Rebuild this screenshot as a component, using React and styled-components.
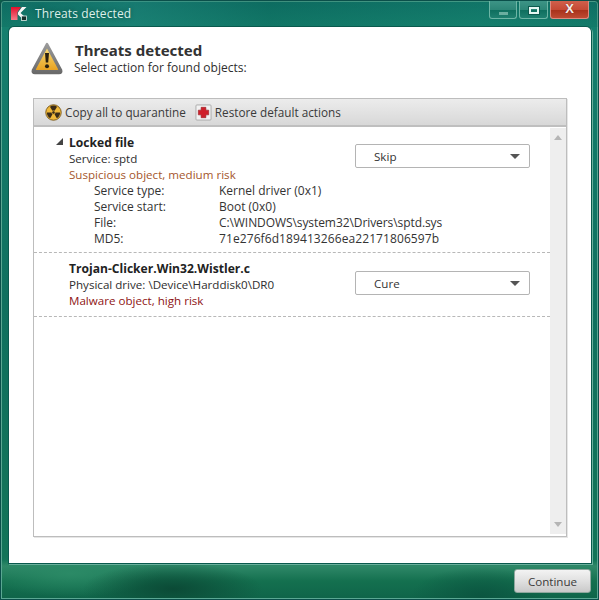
import React from "react";
import styled, { createGlobalStyle } from "styled-components";

const Global = createGlobalStyle`
  html, body { margin: 0; padding: 0; background: #0d5f48; }
  #root { width: 599px; height: 600px; }
  * { box-sizing: border-box; }
`;

const Win = styled.div`
  width: 599px; height: 600px; display: flex; flex-direction: column; overflow: hidden;
  font-family: "Open Sans", "Noto Sans", sans-serif; font-size: 11.6px; color: #2b2b2b;
  border: 1px solid #0b4f4a; border-radius: 4px 4px 0 0;
  background:
    radial-gradient(ellipse 90px 26px at 172px 588px, #0b4a36 0%, rgba(11,74,54,0) 100%),
    radial-gradient(ellipse 70px 30px at 480px 596px, #0b5540 0%, rgba(11,85,64,0) 100%),
    radial-gradient(ellipse 90px 24px at 70px 572px, #2b8a66 0%, rgba(43,138,102,0) 100%),
    linear-gradient(180deg, #0e6f66 0%, #157f6e 4%, #10705f 50%, #137458 93.5%, #2f8868 94.5%, #14704f 97%, #0f6449 100%);
  box-shadow: inset 0 0 0 1px #5aa792;
`;

const TitleBar = styled.div`
  height: 26px; flex: none; display: flex; align-items: flex-start; padding-left: 10px;
  background: linear-gradient(90deg, rgba(10,90,80,.2), rgba(30,130,120,.55) 22%, rgba(10,100,85,.35) 45%, rgba(20,125,105,.35) 80%, rgba(10,100,85,.2));
`;

const AppIcon = styled.svg`
  width: 16px; height: 15px; margin-top: 5px; flex: none;
`;

const TitleText = styled.span`
  margin: 4px 0 0 8px; color: #dcefea; font-size: 12px; line-height: 18px; letter-spacing: .1px;
  text-shadow: 0 0 4px rgba(0,40,30,.5);
`;

const Controls = styled.div`
  margin-left: auto; margin-right: 9px; display: flex; gap: 2px;
`;

const Ctl = styled.div`
  height: 18px; width: ${p => p.$w}px; display: flex; align-items: center; justify-content: center;
  border: 1px solid ${p => (p.$red ? "#dd8a80" : "#6db5a5")}; border-top: none;
  border-radius: 0 0 3px 3px;
  background: ${p => p.$red
    ? "linear-gradient(180deg,#d0604c 0%,#c54a35 50%,#a8321c 55%,#bd4a32 100%)"
    : "linear-gradient(180deg,#3d9486 0%,#2d8677 50%,#0f6f5f 55%,#1f8070 100%)"};
`;

const MinGlyph = styled.div`
  width: 9px; height: 3px; margin-top: 7px; background: #6aaea0;
`;
const MaxGlyph = styled.div`
  width: 10px; height: 7px; background: transparent; border: 2px solid #e6f6f2; border-top-width: 2px;
  outline: 1px solid #0d5a4e; margin-top: 1px;
`;
const CloseGlyph = styled.span`
  font: bold 13px "Liberation Sans", sans-serif; color: #f4ece8; line-height: 14px; margin-top: -1px;
  text-shadow: 0 0 1px #6b1a0c;
`;

const Body = styled.main`
  flex: 1; margin: 0 7px 0 8px; background: #fff; border-radius: 5px 5px 0 0;
  box-shadow: 0 0 0 1px #0a5a4e, 1px 1px 0 1px #6ab09c;
  padding: 13px 24px 26px 24px; display: flex; flex-direction: column; min-height: 0;
`;

const Head = styled.header`
  height: 58px; flex: none; display: flex; align-items: flex-start;
`;

const Warn = styled.svg`
  width: 34px; height: 35px; flex: none; margin-top: 1px; margin-left: -3px;
`;

const HeadText = styled.div`
  margin-left: 11px;
`;

const H1 = styled.h1`
  margin: 0; font-size: 15px; line-height: 20px; font-weight: 700; color: #333;
  font-family: "Noto Sans", sans-serif;
`;

const Sub = styled.div`
  font-size: 12px; line-height: 16px; margin-left: -1px; color: #2e2e2e;
`;

const Panel = styled.section`
  flex: 1; min-height: 0; border: 1px solid #bdbdbd; display: flex; flex-direction: column; background: #fff;
  box-shadow: 1px 1px 0 #e6e6e6;
`;

const Toolbar = styled.div`
  height: 28px; flex: none; display: flex; align-items: center; padding: 0 0 0 11px; gap: 9px;
  background: linear-gradient(180deg, #ececec 0%, #d8d8d8 100%); border-bottom: 2px solid #bfbfbf;
`;

const ToolBtn = styled.div`
  display: flex; align-items: center; gap: 3px; color: #3a3a3a; white-space: nowrap; font-size: 11.75px;
`;

const Tool = styled.svg`
  width: 17px; height: 17px; flex: none;
`;

const Content = styled.div`
  flex: 1; display: flex; min-height: 0;
`;

const List = styled.div`
  flex: 1; min-width: 0;
`;

const Item = styled.article`
  height: ${p => p.$h}px; border-bottom: 1px dashed #b8b8b8; padding: 8px 20px 0 35px;
`;

const TopRow = styled.div`
  display: flex; justify-content: space-between; align-items: flex-start;
`;

const ItemText = styled.div`
  line-height: 16px;
`;

const NameRow = styled.div`
  font-weight: 700; color: #222; position: relative; font-size: 12.1px;
`;

const Tri = styled.span`
  position: absolute; left: -13px; top: 3px; width: 0; height: 0;
  border-style: solid; border-width: 0 0 7px 7px; border-color: transparent transparent #444 transparent;
`;

const Line = styled.div`
  color: ${p => p.$c || "#2e2e2e"};
  white-space: nowrap;
`;

const Details = styled.dl`
  margin: 0 0 0 25px; display: grid; grid-template-columns: 125px auto; line-height: 16px; font-size: 12px;
`;
const Dt = styled.dt` color: #333; `;
const Dd = styled.dd`
  margin: 0; color: #333; white-space: nowrap; letter-spacing: ${p => p.$ls || 0}px;
`;

const Select = styled.div`
  width: 175px; height: 24px; flex: none; border: 1px solid #b4b4b4; border-radius: 2px; margin-top: ${p => p.$mt}px;
  background: #fff; display: flex; align-items: center; padding: 0 9px 0 18px; justify-content: space-between; color: #333;
`;

const Caret = styled.span`
  width: 0; height: 0; border-style: solid; border-width: 5px 5px 0 5px; border-color: #555 transparent transparent transparent;
`;

const Scroll = styled.aside`
  width: 16px; flex: none; background: #eeeeee; display: flex; flex-direction: column; justify-content: space-between; align-items: center; padding: 7px 0; margin: 1px 0 2px 0;
`;

const Up = styled.span`
  width: 0; height: 0; border-style: solid; border-width: 0 4px 5px 4px; border-color: transparent transparent #b5b5b5 transparent;
`;
const Down = styled.span`
  width: 0; height: 0; border-style: solid; border-width: 5px 4px 0 4px; border-color: #b5b5b5 transparent transparent transparent;
`;

const Footer = styled.footer`
  height: 36px; flex: none; display: flex; justify-content: flex-end; align-items: flex-start; padding: 6px 7px 0 0;
`;

const Continue = styled.button`
  width: 77px; height: 24px; border: 1px solid #8fa79e; border-radius: 3px; padding: 0;
  background: linear-gradient(180deg, #f3f3f3 0%, #e0e0e0 50%, #c9c9c9 100%);
  font: 11.6px "Open Sans", "Noto Sans", sans-serif; color: #3a3a3a;
`;

export default function App() {
  return (
    <Win>
      <Global />
      <TitleBar>
        <AppIcon viewBox="0 0 16 15">
          <defs>
            <linearGradient id="k" x1="0" y1="0" x2="0" y2="1">
              <stop offset="0" stopColor="#e3102c" />
              <stop offset="1" stopColor="#f47a88" />
            </linearGradient>
          </defs>
          <path d="M0 1H10L6.500 6V14H0z" fill="url(#k)" />
          <path d="M11 1h4.500L9.500 7L14 11V14H12.500L7 8.500V6.500z" fill="#f6f6f6" />
          <rect x="10.500" y="10" width="5" height="4.500" fill="#16302c" stroke="#dfeeea" strokeWidth=".8" />
        </AppIcon>
        <TitleText>Threats detected</TitleText>
        <Controls>
          <Ctl $w={28}><MinGlyph /></Ctl>
          <Ctl $w={29}><MaxGlyph /></Ctl>
          <Ctl $w={39} $red><CloseGlyph>X</CloseGlyph></Ctl>
        </Controls>
      </TitleBar>
      <Body>
        <Head>
          <Warn viewBox="0 0 34 35">
            <defs>
              <linearGradient id="w" x1="0" y1="0" x2="0" y2="1">
                <stop offset="0" stopColor="#f8da72" />
                <stop offset="1" stopColor="#e8a222" />
              </linearGradient>
              <linearGradient id="r" x1="0" y1="0" x2="0" y2="1">
                <stop offset="0" stopColor="#9a9a9a" />
                <stop offset="1" stopColor="#6a6a6a" />
              </linearGradient>
            </defs>
            <path d="M17 3 L31 29 Q32 32 29 32 L5 32 Q2 32 3 29 Z" fill="url(#r)" stroke="url(#r)" strokeWidth="2.500" strokeLinejoin="round" />
            <path d="M17 7.500 L28 28 Q28.500 29 27.500 29 L6.500 29 Q5.500 29 6 28 Z" fill="url(#w)" />
            <path d="M15 12h4l-.8 9.500h-2.400z" fill="#2a2010" />
            <circle cx="17" cy="25.200" r="2" fill="#2a2010" />
          </Warn>
          <HeadText>
            <H1>Threats detected</H1>
            <Sub>Select action for found objects:</Sub>
          </HeadText>
        </Head>
        <Panel>
          <Toolbar>
            <ToolBtn>
              <Tool viewBox="0 0 18 18">
                <circle cx="9" cy="9" r="8.200" fill="#f0b93a" stroke="#7a5a20" strokeWidth="1" />
                <path d="M9 9L5.200 2.800A7 7 0 0 1 12.800 2.800Z" fill="#3a2c18" />
                <path d="M9 9h7a7 7 0 0 1-3.500 6.100Z" fill="#3a2c18" />
                <path d="M9 9H2a7 7 0 0 0 3.500 6.100Z" fill="#3a2c18" />
                <circle cx="9" cy="9" r="1.800" fill="#3a2c18" stroke="#f0b93a" strokeWidth=".8" />
              </Tool>
              Copy all to quarantine
            </ToolBtn>
            <ToolBtn>
              <Tool viewBox="0 0 18 18">
                <rect x="1" y="1" width="16" height="16" rx="1" fill="#f2f2f2" stroke="#aaa" />
                <path d="M6.500 3.500h5v3h3v5h-3v3h-5v-3h-3v-5h3z" fill="#cf1f2a" stroke="#8f1a20" strokeWidth=".6" />
              </Tool>
              Restore default actions
            </ToolBtn>
          </Toolbar>
          <Content>
            <List>
              <Item $h={126}>
                <TopRow>
                  <ItemText>
                    <NameRow><Tri />Locked file</NameRow>
                    <Line>Service: sptd</Line>
                    <Line $c="#a5562c">Suspicious object, medium risk</Line>
                  </ItemText>
                  <Select $mt={9}>Skip<Caret /></Select>
                </TopRow>
                <Details>
                  <Dt>Service type:</Dt><Dd>Kernel driver (0x1)</Dd>
                  <Dt>Service start:</Dt><Dd>Boot (0x0)</Dd>
                  <Dt>File:</Dt><Dd $ls={-0.08}>C:\WINDOWS\system32\Drivers\sptd.sys</Dd>
                  <Dt>MD5:</Dt><Dd $ls={0.09}>71e276f6d189413266ea22171806597b</Dd>
                </Details>
              </Item>
              <Item $h={64}>
                <TopRow>
                  <ItemText>
                    <NameRow>Trojan-Clicker.Win32.Wistler.c</NameRow>
                    <Line>Physical drive: \Device\Harddisk0\DR0</Line>
                    <Line $c="#8e1414">Malware object, high risk</Line>
                  </ItemText>
                  <Select $mt={10}>Cure<Caret /></Select>
                </TopRow>
              </Item>
            </List>
            <Scroll><Up /><Down /></Scroll>
          </Content>
        </Panel>
      </Body>
      <Footer><Continue>Continue</Continue></Footer>
    </Win>
  );
}
